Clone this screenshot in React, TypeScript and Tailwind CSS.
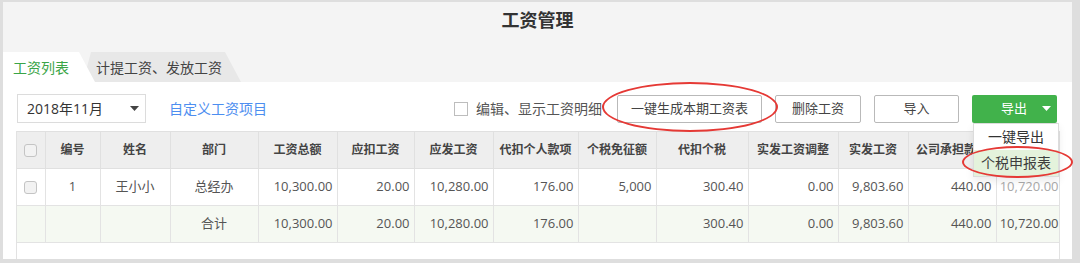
import type { ReactNode } from "react";

const FONT = { fontFamily: '"Open Sans", "Noto Sans CJK SC", sans-serif' };

type Row = {
  no?: string;
  name?: string;
  dept: string;
  total: string;
  deduct: string;
  payable: string;
  withhold: string;
  exempt: string;
  tax: string;
  adjust: string;
  net: string;
  company: string;
  last: string;
  isTotal?: boolean;
};

const rows: Row[] = [
  {
    no: "1",
    name: "王小小",
    dept: "总经办",
    total: "10,300.00",
    deduct: "20.00",
    payable: "10,280.00",
    withhold: "176.00",
    exempt: "5,000",
    tax: "300.40",
    adjust: "0.00",
    net: "9,803.60",
    company: "440.00",
    last: "10,720.00",
  },
  {
    dept: "合计",
    total: "10,300.00",
    deduct: "20.00",
    payable: "10,280.00",
    withhold: "176.00",
    exempt: "",
    tax: "300.40",
    adjust: "0.00",
    net: "9,803.60",
    company: "440.00",
    last: "10,720.00",
    isTotal: true,
  },
];

// last column header sits under the export menu, so it is left blank
const headers = [
  "编号",
  "姓名",
  "部门",
  "工资总额",
  "应扣工资",
  "应发工资",
  "代扣个人款项",
  "个税免征额",
  "代扣个税",
  "实发工资调整",
  "实发工资",
  "公司承担款项",
  "",
];

const widths = [28, 55, 70, 88, 79, 77, 79, 85, 78, 92, 90, 70, 88, 75];

function Caret({ color = "#444" }: { color?: string }) {
  return (
    <svg width="9" height="5" viewBox="0 0 9 5">
      <path d="M0 0h9L4.5 5z" fill={color} />
    </svg>
  );
}

function Box() {
  return (
    <span className="inline-block w-[13px] h-[13px] rounded-[3px] border border-[#c4c4c4] bg-[#f2f2f2] align-middle" />
  );
}

function Btn({ children, w }: { children: ReactNode; w: string }) {
  return (
    <button
      className={`${w} h-[28px] border border-[#b9b9b9] rounded-[2px] bg-white text-[13px] text-[#444] flex items-center justify-center`}
    >
      {children}
    </button>
  );
}

export default function App() {
  return (
    <div
      className="w-[1080px] h-[263px] bg-[#dedede] pt-[2px] pl-[3px] pr-[8px] pb-[4px]"
      style={FONT}
    >
      <div className="h-full flex flex-col bg-[#f4f4f4]">
        {/* title */}
        <div className="h-[50px] flex justify-center pt-[7px]">
          <h1 className="text-[18px] leading-[22px] font-bold text-[#333]">工资管理</h1>
        </div>

        {/* tabs */}
        <div className="h-[30px] flex">
          <div className="relative z-10 w-[92px] h-full bg-white pl-[10px] flex items-center text-[14px] text-[#3aa547] [clip-path:polygon(0_0,76px_0,92px_100%,0_100%)]">
            工资列表
          </div>
          <div className="-ml-[12px] w-[158px] h-full bg-[#e8e8e8] pl-[13px] flex items-center text-[14px] text-[#444] [clip-path:polygon(8px_0,142px_0,158px_100%,0_100%)]">
            计提工资、发放工资
          </div>
        </div>

        {/* content */}
        <div className="flex-1 bg-white flex flex-col">
          <div className="mt-[12px] h-[29px] pl-[14px] pr-[15px] flex items-center">
            <div className="w-[129px] h-[29px] border border-[#dcdcdc] flex items-center justify-between pl-[9px] pr-[6px] text-[14px] text-[#333]">
              <span>2018年11月</span>
              <Caret />
            </div>
            <a className="ml-[23px] text-[14px] text-[#4d8ef0]">自定义工资项目</a>

            <label className="ml-auto flex items-center text-[14px] text-[#555]">
              <span className="w-[14px] h-[14px] border border-[#bdbdbd] bg-white" />
              <span className="ml-[8px]">编辑、显示工资明细</span>
            </label>

            <div className="relative ml-[15px]">
              <Btn w="w-[145px]">一键生成本期工资表</Btn>
              <span className="absolute -left-[15px] -top-[13px] w-[176px] h-[50px] rounded-[50%] border-2 border-[#e53935]" />
            </div>
            <div className="ml-[13px]">
              <Btn w="w-[86px]">删除工资</Btn>
            </div>
            <div className="ml-[13px]">
              <Btn w="w-[85px]">导入</Btn>
            </div>

            <div className="relative ml-[13px]">
              <button className="w-[85px] h-[28px] rounded-[2px] bg-[#41b24b] text-white text-[13px] flex items-center pl-[29px]">
                导出
                <span className="ml-[15px] flex">
                  <Caret color="#fff" />
                </span>
              </button>
              <div className="absolute z-20 left-[1px] top-full w-[86px] h-[54px] bg-white border border-[#dcdcdc] shadow-[0_4px_8px_rgba(0,0,0,0.08)] flex flex-col text-[14px] text-[#333]">
                <div className="h-[26px] flex items-center justify-center">一键导出</div>
                <div className="h-[26px] flex items-center justify-center bg-[#e4f3dc] text-[#3d3d3d]">
                  个税申报表
                </div>
              </div>
              <span className="absolute z-30 -left-[10px] top-[51px] w-[111px] h-[32px] rounded-[50%] border-2 border-[#e53935]" />
            </div>
          </div>

          {/* table */}
          <div className="mt-[8px] ml-[13px] mr-[12px] flex-1 border-l border-r border-[#e2e2e2] overflow-hidden">
            <table className="table-fixed border-collapse text-[13px] text-[#555]" style={{ width: 1054 }}>
              <colgroup>
                {widths.map((w, i) => (
                  <col key={i} style={{ width: w }} />
                ))}
              </colgroup>
              <thead>
                <tr className="h-[37px] bg-[#eeeeee]">
                  <th className="border border-[#e0e0e0] border-l-0 text-center">
                    <Box />
                  </th>
                  {headers.map((h, i) => (
                    <th
                      key={i}
                      className="border border-[#e0e0e0] text-center font-bold text-[12px] text-[#444] whitespace-nowrap overflow-hidden"
                    >
                      {h}
                    </th>
                  ))}
                </tr>
              </thead>
              <tbody>
                {rows.map((r, i) => {
                  const num = [r.total, r.deduct, r.payable, r.withhold, r.exempt, r.tax, r.adjust, r.net, r.company];
                  return (
                    <tr key={i} className={`h-[37px] ${r.isTotal ? "bg-[#f5f9f2]" : "bg-white"}`}>
                      <td className="border border-[#e3e3e3] border-l-0 text-center">
                        {!r.isTotal && <Box />}
                      </td>
                      <td className="border border-[#e3e3e3] text-center">{r.no}</td>
                      <td className="border border-[#e3e3e3] text-center">{r.name}</td>
                      <td className="border border-[#e3e3e3] text-center">{r.dept}</td>
                      {num.map((v, j) => (
                        <td key={j} className="border border-[#e3e3e3] text-right pr-[4px]">
                          {v}
                        </td>
                      ))}
                      <td
                        className={`border border-[#e3e3e3] text-right pr-[12px] whitespace-nowrap ${
                          r.isTotal ? "" : "text-[#a9a9a9]"
                        }`}
                      >
                        {r.last}
                      </td>
                    </tr>
                  );
                })}
              </tbody>
            </table>
          </div>
        </div>
      </div>
    </div>
  );
}
